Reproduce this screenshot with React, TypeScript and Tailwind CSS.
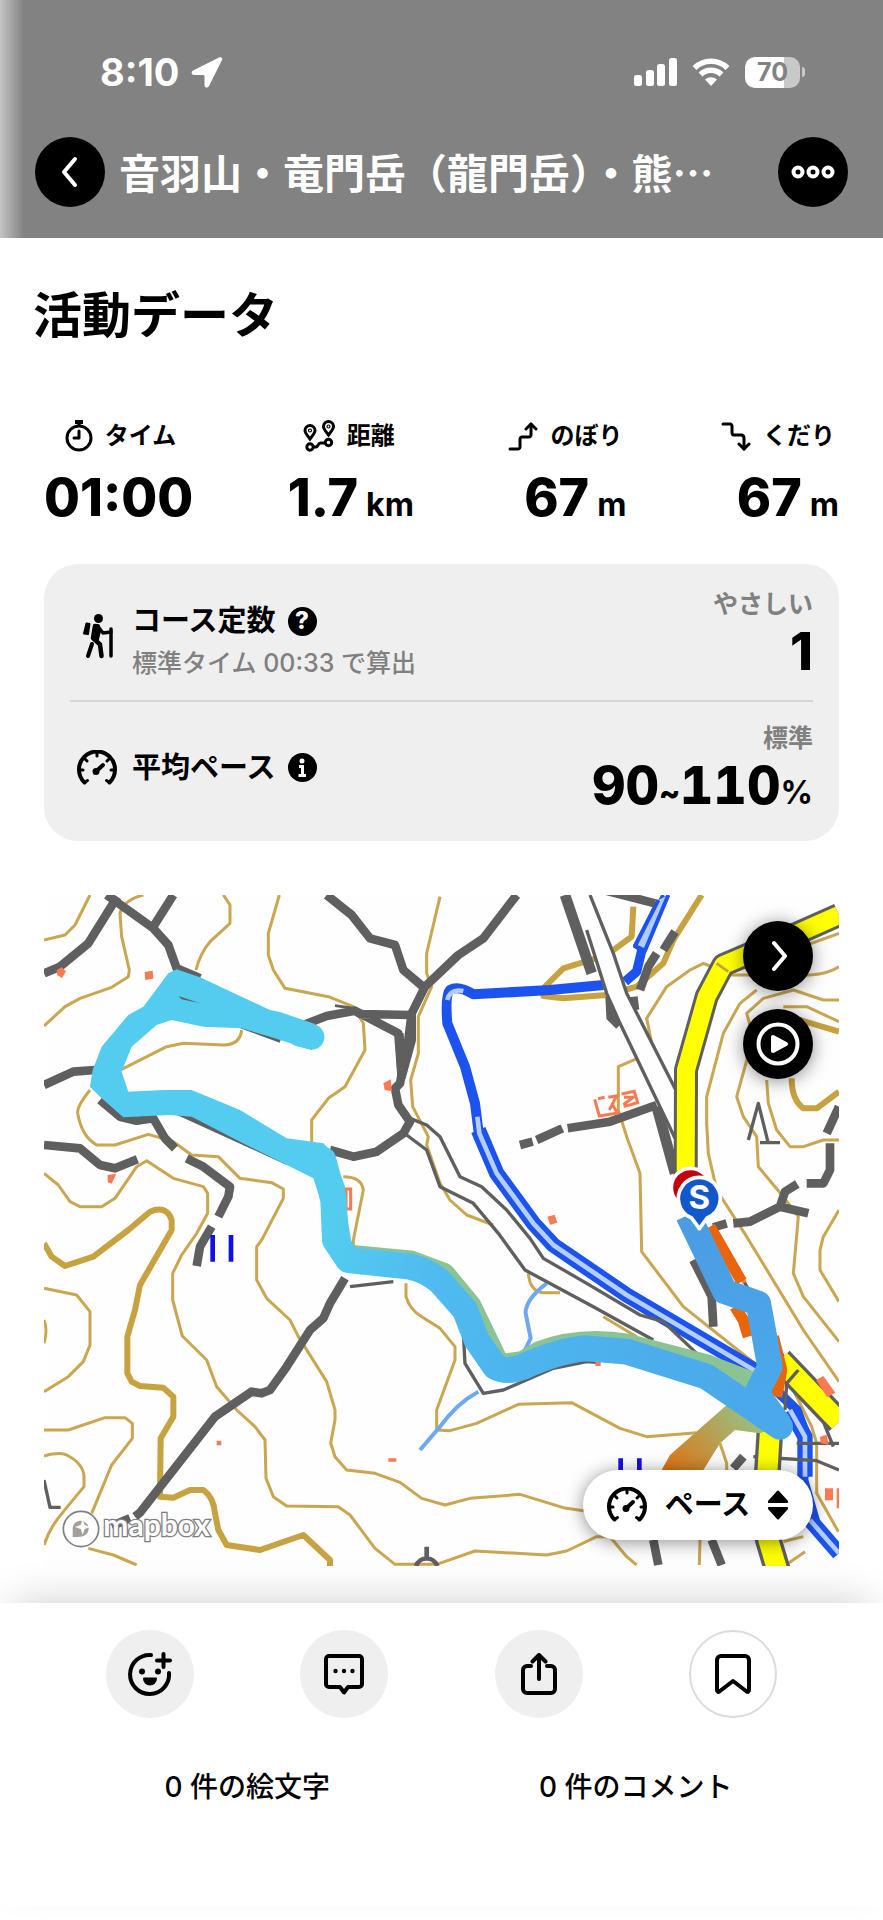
import type { ReactNode } from "react";

interface StatItem {
  label: string;
  value: string;
  unit?: string;
  icon: ReactNode;
  align: string;
  labelPadding: string;
}

const fontClass = "font-['Inter','Noto_Sans_CJK_JP',sans-serif]";

function TimerIcon() {
  return (
    <svg width="28" height="32" viewBox="0 0 28 32" fill="none" stroke="currentColor" strokeWidth="3">
      <circle cx="14" cy="18" r="12" />
      <path d="M10 2h8" strokeWidth="4" />
      <path d="M14 2v5" />
      <path d="M14 11v7H9" strokeLinecap="round" strokeLinejoin="round" />
    </svg>
  );
}

function RouteIcon() {
  return (
    <svg width="32" height="32" viewBox="0 0 32 32" fill="none" stroke="currentColor" strokeWidth="3">
      <path d="M7 19C4 15 2 13 2 10.500a5 5 0 0 1 10 0C12 13 10 15 7 19z" />
      <path d="M25.500 15c-3-4-5-6-5-8.500a5 5 0 0 1 10 0c0 2.500-2 4.500-5 8.500z" />
      <circle cx="7" cy="27" r="3.200" />
      <circle cx="25.500" cy="22.500" r="3.200" />
      <path d="M10.500 27h2.500c2 0 2-4 4.500-4h4.500" />
      <circle cx="7" cy="10.500" r="0.600" />
      <circle cx="25.500" cy="6.500" r="0.600" />
    </svg>
  );
}

function UpIcon() {
  return (
    <svg width="30" height="30" viewBox="0 0 30 30" fill="none" stroke="currentColor" strokeWidth="3" strokeLinecap="round" strokeLinejoin="round">
      <path d="M2 28h8c1 0 2-1 2-2v-8c0-1 1-2 2-2h7c1 0 2-1 2-2V3" />
      <path d="M18 8l5-5 5 5" />
    </svg>
  );
}

function DownIcon() {
  return (
    <svg width="30" height="30" viewBox="0 0 30 30" fill="none" stroke="currentColor" strokeWidth="3" strokeLinecap="round" strokeLinejoin="round">
      <path d="M2 3h7c1 0 2 1 2 2v6c0 2 1 3 2 3h7c2 0 3 1 3 3v11" />
      <path d="M18 23l5 5 5-5" />
    </svg>
  );
}

function GaugeIcon() {
  return (
    <svg width="40" height="36" viewBox="0 0 40 36" fill="none" stroke="currentColor" strokeWidth="4" strokeLinecap="round">
      <path d="M7.500 32.500A18 18 0 1 1 32.500 32.500" />
      <path d="M20 3v3M3 20h3M37 20h-3M8 9l2 2M32 9l-2 2M7.500 32.500l3-2M32.500 32.500l-3-2" strokeWidth="3" />
      <path d="M26 15L19.500 21" strokeWidth="4" />
      <circle cx="19" cy="21.500" r="1.500" />
    </svg>
  );
}

function HikerIcon() {
  return (
    <svg width="32" height="46" viewBox="0 0 32 46" fill="none" stroke="currentColor" strokeLinecap="round" strokeLinejoin="round">
      <circle cx="16.500" cy="5.500" r="4.500" fill="currentColor" stroke="none" />
      <path d="M4.500 10.500l3 .5-1.500 10-4-.5z" fill="currentColor" strokeWidth="2" />
      <path d="M13 13L11 25l7 6.500L19.500 43" strokeWidth="4.500" />
      <path d="M13 13h3l1 5-2 8-3-1z" fill="currentColor" strokeWidth="4" />
      <path d="M17 15l4 5 8-1" strokeWidth="3.500" />
      <path d="M29 16v27" strokeWidth="3.500" />
      <path d="M10 31L6 43" strokeWidth="4" />
    </svg>
  );
}

// Topographic base map with the recorded track on top
function TrackMap() {
  return (
    <svg viewBox="12 15 2385 2013" className="block w-full" role="img" aria-label="活動ルート">
      <defs>
        <linearGradient id="track" gradientUnits="userSpaceOnUse" x1="885" y1="1000" x2="2100" y2="1500">
          <stop offset="0" stopColor="#53ccef" />
          <stop offset="0.25" stopColor="#4fbbf0" />
          <stop offset="1" stopColor="#4aa9ea" />
        </linearGradient>
        <linearGradient id="branch" gradientUnits="userSpaceOnUse" x1="1880" y1="1740" x2="2090" y2="1560">
          <stop offset="0" stopColor="#e07414" />
          <stop offset="1" stopColor="#9eba78" />
        </linearGradient>
        <linearGradient id="leg" gradientUnits="userSpaceOnUse" x1="1940" y1="960" x2="2180" y2="1500">
          <stop offset="0" stopColor="#4b9be2" />
          <stop offset="1" stopColor="#4aa9ea" />
        </linearGradient>
      </defs>
      <rect x="12" y="15" width="2385" height="2013" fill="#fefefe" />

      {/* Contour lines */}
      <g fill="none" stroke="#c9a650" strokeWidth="9" strokeLinejoin="round">
        <path d="M150 15L105 105L75 135L12 150" />
        <path d="M310 15Q250 30 240 70L245 140L268 240L265 260L215 292L120 325L75 350L12 408" />
        <path d="M550 15L570 45V100L510 155Q480 190 468 240" />
        <path d="M718 15L685 130V195L700 240L735 295L865 320L940 350L970 400L975 480L915 590L865 625L815 690V760" />
        <path d="M605 420Q600 465 550 465L430 460L380 470L245 538" />
        <path d="M150 600Q110 650 113 670Q125 740 170 765H225L325 733L400 755L455 795L535 800L600 865L695 878L730 897V925L665 1050L650 1070V1170L680 1225L750 1290L775 1340L860 1475L885 1560V1590L872 1660L885 1700L920 1740L1005 1750L1080 1777L1145 1825L1215 1845L1290 1825L1440 1813L1570 1853L1650 1865" />
        <path d="M12 850L55 885L90 935L120 950H185L225 925L290 830L320 812L400 865L490 890L503 910V970L470 1030L425 1095L398 1150V1230L427 1338L500 1410L530 1490L590 1560L645 1610L675 1650L678 1765L700 1820L740 1848L895 1850L930 1875L1005 1975L1065 2023H1190L1305 1983L1520 1995L1580 1983L1670 1940H1710L1760 2000L1790 2025" />
        <path d="M12 1195L110 1215L150 1265V1365L130 1415L85 1460L12 1505" />
        <path d="M12 1620H85L195 1583H255L277 1600V1645L215 1725L155 1870" />
        <path d="M12 1698Q60 1685 80 1695Q130 1720 132 1760V1790L70 1865Q30 1910 12 1965" />
        <path d="M12 1290Q24 1320 12 1360M145 1975L220 1995L290 2025" />
        <path d="M1200 20L1160 190V250L1175 290L1135 380V490L1112 570L1118 650L1165 740L1160 765L1200 880L1230 930L1280 975L1360 1005" />
        <path d="M910 860Q965 860 970 900L940 1050V1080M1298 1180" />
        <path d="M1098 1180V1220Q1110 1260 1145 1280L1200 1315L1245 1370V1410L1190 1560V1620L1230 1622L1310 1600L1435 1543L1595 1538L1740 1615L1820 1640L1970 1628" />
        <path d="M1465 1150Q1470 1205 1510 1208H1560M1690 1280L1790 1340" />
        <path d="M2040 240L1990 220L1950 240L1880 290L1820 385L1840 485L1735 530V660L1760 740L1800 850L1805 1085L1930 1250L2150 1425" />
        <path d="M2397 130L2300 165M2397 230Q2370 250 2310 255L2070 255" />
        <path d="M2150 300L2100 340L2050 430L2000 620V700L2005 790L2030 900L2120 1040L2290 1320L2397 1475" />
        <path d="M2397 330H2350L2260 300L2170 325L2120 370L2140 440L2090 620L2110 680L2150 740L2155 830L2230 920L2275 980L2260 1150L2290 1220L2397 1355" />
        <path d="M2180 570L2185 640L2210 720L2250 770H2290L2350 750H2397M2230 350L2300 350L2397 395" />
        <path d="M2397 960L2350 1040L2340 1080V1140L2397 1235" />
        <path d="M2260 1500L2315 1610L2330 1660V1810L2395 1925M2040 1660L2060 1720V1750M1980 1950L1978 2025M2245 2020L2295 1985M2230 1955L2290 1940" />
      </g>
      <g fill="none" stroke="#c6a240" strokeWidth="18" strokeLinejoin="round">
        <path d="M12 1060L35 1100L75 1128L160 1100L265 1020L330 965Q380 945 395 990V1020L300 1185L285 1260L262 1340V1450L275 1475L300 1488L370 1493L400 1520V1580L362 1645L360 1820L400 1823L450 1800H490Q520 1820 525 1870L535 1920L560 1965L660 1980L790 1935L870 2010V2028" />
        <path d="M1985 15L1900 150L1870 220L1790 290L1700 315L1570 325L1510 318L1515 290L1570 235L1700 195L1775 140L1780 50" />
        <path d="M2255 565Q2255 630 2290 655H2330L2397 605M2280 390L2397 425" />
      </g>

      {/* Streams and rivers */}
      <g fill="none" strokeLinejoin="round">
        <path d="M1520 1180Q1455 1230 1457 1270L1472 1345L1450 1390M1315 1505Q1250 1540 1200 1610L1140 1680" stroke="#6fa8ef" strokeWidth="12" />
        <path d="M1690 285L1530 300L1300 313Q1255 285 1230 300Q1215 315 1222 400L1275 530L1305 640L1315 720L1370 850L1480 1000L1540 1065L1760 1215L2150 1445L2270 1560L2300 1640L2290 1770L2330 1910L2397 1990" stroke="#1c53ee" strokeWidth="30" />
        <path d="M1315 720L1370 850L1480 1000L1540 1065L1760 1215L2150 1445M2250 1560L2295 1640L2295 1760M2310 1890L2397 1990" stroke="#1c53ee" strokeWidth="46" />
        <path d="M1270 303Q1230 295 1222 330M1312 680L1318 730L1370 850L1480 1000L1540 1065L1760 1215L2150 1445M2250 1560L2295 1640L2295 1760M2310 1890L2397 1990" stroke="#b4ceff" strokeWidth="14" />
        <path d="M1870 15L1785 168L1805 182L1795 240L1760 270" stroke="#1c53ee" strokeWidth="12" />
        <path d="M1855 30L1785 168L1815 182L1885 15" fill="#b0ccff" stroke="#1c53ee" strokeWidth="12" />
        <path d="M1805 182L1790 245L1755 275" stroke="#1c53ee" strokeWidth="28" />
      </g>

      {/* Roads */}
      <g fill="none" stroke="#5f5f5f" strokeWidth="26" strokeLinejoin="round">
        <path d="M200 15L235 40L340 115L385 165L410 235L480 265" />
        <path d="M232 20L145 160L60 230L12 250M400 15L340 110" />
        <path d="M860 15L935 75L990 145L1065 165L1090 240L1155 295" />
        <path d="M1430 15L1330 145L1255 195L1155 290L1115 370L1105 450L1080 580L1065 595L1075 645L1110 695L1090 730L1010 785L940 800L870 780" />
        <path d="M1115 370V450L1085 560L1078 430" />
        <path d="M790 405L860 378L945 362L960 372L1115 375M950 365L1075 430L1085 560" />
        <path d="M885 347L945 355" strokeWidth="8" />
        <path d="M12 585L100 545L165 540M12 765L120 775L180 825L225 835L292 808" />
        <path d="M180 630L240 680L290 692L340 685L375 745L405 775M440 805L490 830L570 890L565 920L535 980M515 1010L480 1070L470 1128" />
        <path d="M400 660L740 815M600 405L722 450" strokeWidth="18" />
        <path d="M915 1165L870 1240L850 1285L810 1320L740 1430L690 1500L665 1510L635 1505L525 1580L300 1868L285 1880M270 1885L215 1908" />
        <path d="M1690 0L1845 40M1905 125L1870 180M1850 190L1825 230L1800 300M1780 320L1785 360" />
        <path d="M1440 765L1478 755M1490 750L1567 715M1583 715L1710 695L1850 645" />
        <path d="M2020 1012L2060 1000M2080 1000L2130 995L2220 950L2235 905L2272 882M2220 950L2305 970M2300 880H2350L2370 840V760M2360 730L2397 650" />
        <path d="M1960 1110L2015 1220L2020 1310M2080 1735L2110 1700M1840 1950L1855 2025M2015 1950L2045 2025" />
      </g>
      <path d="M1712 320L1715 380L1740 405M1850 650L1905 850" fill="none" stroke="#5f5f5f" strokeWidth="32" />
      <path d="M1650 15L1720 190L1760 310L1905 600L1905 740L1740 405L1700 310L1640 130L1600 15Z" fill="#fefefe" />
      <path d="M1575 15L1655 250" fill="none" stroke="#5f5f5f" strokeWidth="32" />
      <g fill="none" stroke="#5f5f5f" strokeWidth="10" strokeLinejoin="round">
        <path d="M1650 15L1720 190L1760 310L1910 605M1640 120L1700 310L1740 400L1905 745" />
        <path d="M1110 685L1160 705L1200 740L1260 860L1325 890L1400 960L1470 1045L1510 1105L1640 1180L1800 1275L1870 1295L1970 1390" />
        <path d="M1100 735L1160 780L1200 890L1300 940L1375 1030L1455 1140L1660 1250L1840 1350" />
        <path d="M1270 1330L1275 1420L1330 1510L1390 1500L1540 1435L1640 1415L1680 1418" />
        <path d="M930 1190L1060 1175M2125 750L2155 640L2185 760M2160 758H2220M12 1770L30 1852H62" />
        <path d="M2020 1020L2110 1170L2230 1400M2260 1500L2340 1570L2380 1670M2270 1660H2397M2140 1700L2330 1712L2397 1740" />
        <path d="M1160 1970V2010M1128 2028A34 34 0 0 1 1192 2028" strokeWidth="14" />
      </g>

      {/* Yellow prefectural road */}
      <g fill="none" strokeLinejoin="round">
        <path d="M2397 75L2250 140L2050 225L2000 320L1938 540L1937 880" stroke="#5f5f5f" strokeWidth="72" />
        <path d="M2397 75L2250 140L2050 225L2000 320L1938 540L1937 880" stroke="#ffff00" strokeWidth="54" />
        <path d="M2220 1410L2397 1595M2190 1620L2180 1780L2185 1950L2215 2050" stroke="#5f5f5f" strokeWidth="80" />
        <path d="M2220 1410L2397 1595M2190 1620L2180 1780L2185 1950L2215 2050" stroke="#ffff00" strokeWidth="60" />
        <path d="M2030 220L2065 245" stroke="#c6a240" strokeWidth="8" />
        <path d="M2275 1440L2240 1480L2235 1560" stroke="#5f5f5f" strokeWidth="10" />
      </g>

      {/* Buildings and paddy marks */}
      <g fill="#fb7a52">
        <path d="M50 240l15-8 13 12-12 20-14-8zM314 246l24-4 2 24-24 4zM1030 580l22-12 4 36-22-4zM203 855l26-4-14 30-12-4z" />
        <path d="M1522 980l22-6 8 24-22 6zM530 1652h14v14h-14zM1045 1705h24v10h-24zM2328 1470l22-12 36 50-24 14zM2340 1640l20-6 6 30-24-4zM2355 1795h24v36h-24zM2390 1795h7v60h-7zM1666 1412h16v16h-16zM2100 1165l14-4 4 16-12 4z" />
      </g>
      <g fill="none" stroke="#fb7a52" strokeWidth="9">
        <path d="M918 897h14v60h-14zM1664 628l14 50 60-10M1674 626l20-4M1705 622l25-4-22 42M1730 665l-12-20M1745 612l38-8 10 34-42 12M1752 622l28 0-30 22" />
      </g>
      <path d="M518 1035v80M573 1035v80M1742 1705v40M1798 1705v40" stroke="#1010e8" strokeWidth="14" />

      {/* Recorded track */}
      <g fill="none" strokeLinejoin="round">
        <path d="M2010 1010L2105 1175M2085 1250L2110 1290L2125 1340M2200 1340L2225 1440L2210 1520" stroke="#e8650c" strokeWidth="34" />
        <path d="M1865 1740L1890 1695L2060 1545L2180 1500L2210 1610L2160 1630L2085 1620L2040 1660L1990 1740Z" fill="url(#branch)" />
        <path d="M920 1100L1110 1118L1210 1155L1288 1250L1375 1430L1450 1420L1500 1390Q1620 1345 1760 1368L2000 1430L2180 1500" stroke="#8cc394" strokeWidth="74" />
        <path d="M1944 975L2055 1205L2155 1240L2190 1430L2150 1510L2220 1605" stroke="url(#leg)" strokeWidth="76" />
        <path d="M410 238L480 262L690 360L720 366L825 402L815 480L690 440L605 415L490 410L395 390L350 405L275 470L245 545L265 605L370 600L455 600L600 660L740 745L850 760L880 790L915 890L925 1000L935 1060L848 1060L845 940L820 865L730 820L600 755L455 680L390 675L250 682L180 620L150 590L158 540L185 470L265 375L310 350L385 250Z" fill="#53ccef" />
        <path d="M780 432L815 441" stroke="#53ccef" strokeWidth="76" strokeLinecap="round" />
        <path d="M850 810L880 930L885 1050L925 1110L1110 1130Q1160 1140 1200 1175L1275 1260L1310 1350L1365 1430Q1400 1450 1450 1430Q1560 1380 1640 1375L1760 1385L2000 1460L2220 1610" stroke="url(#track)" strokeWidth="78" strokeLinecap="round" />
        <path d="M415 318L480 340L425 328Z" fill="#5f5f5f" />
      </g>

      {/* Goal and start pins */}
      <circle cx="1952" cy="893" r="58" fill="#c4000f" stroke="#fff" strokeWidth="11" />
      <path d="M1978 1016L1955 984A63 63 0 1 1 2001 984Z" fill="#1257cc" stroke="#fff" strokeWidth="11" strokeLinejoin="round" />
      <text x="1978" y="958" textAnchor="middle" fontSize="99" fontWeight="700" fill="#fff" fontFamily="Inter, sans-serif">
        S
      </text>

      {/* Attribution */}
      <circle cx="123" cy="1917" r="53" fill="#fff" stroke="#808080" strokeWidth="5" />
      <path d="M98 1942V1915A24 24 0 1 1 122 1940Z" fill="#a3a09a" />
      <path d="M128 1888l6 17 17 6-17 6-6 17-6-17-17-6 17-6z" fill="#fff" />
      <text x="190" y="1938" fontSize="90" fontWeight="700" fill="#fff" stroke="#808080" strokeWidth="8" paintOrder="stroke" fontFamily="Lato, sans-serif">
        mapbox
      </text>
    </svg>
  );
}

const stats: StatItem[] = [
  { label: "タイム", value: "01:00", icon: <TimerIcon />, align: "items-center", labelPadding: "pl-1" },
  { label: "距離", value: "1.7", unit: "km", icon: <RouteIcon />, align: "items-center", labelPadding: "pr-1" },
  { label: "のぼり", value: "67", unit: "m", icon: <UpIcon />, align: "items-end", labelPadding: "pr-1" },
  { label: "くだり", value: "67", unit: "m", icon: <DownIcon />, align: "items-end", labelPadding: "pr-1" },
];

export default function App() {
  return (
    <div className={`${fontClass} min-h-screen bg-white text-black`}>
      {/* Header */}
      <header className="bg-[linear-gradient(to_right,#c4c4c4,#828282_24px)] pt-12 pb-[31px] text-white">
        <div className="flex h-12 items-center justify-between pr-[78px] pl-[100px]">
          <div className="flex items-center gap-3">
            <span className="text-[38px] leading-12 font-bold">8:10</span>
            <svg width="32" height="32" viewBox="0 0 32 32" fill="currentColor">
              <path d="M28 1.500L2 14.500C0 15.500 0 19 3 19h9c1 0 1.500 .5 1.500 1.500V29c0 3 3 3.500 4.500 1L31 4c1-2-1-3.500-3-2.500z" />
            </svg>
          </div>
          <div className="flex items-center gap-[15px]">
            <svg width="43" height="28" viewBox="0 0 43 28" fill="currentColor">
              <rect x="0" y="17" width="8" height="11" rx="2.500" />
              <rect x="12" y="12" width="8" height="16" rx="2.500" />
              <rect x="23" y="6" width="8" height="22" rx="2.500" />
              <rect x="35" y="0" width="8" height="28" rx="2.500" />
            </svg>
            <svg width="38" height="28" viewBox="0 0 38 28" fill="none" stroke="currentColor" strokeWidth="5.500">
              <path d="M2.500 10a23.500 23.500 0 0 1 33 0" />
              <path d="M8.500 16.500a15 15 0 0 1 21 0" />
              <path d="M13 21.500a9 9 0 0 1 12 0l-6 6.500z" fill="currentColor" stroke="none" />
            </svg>
            <div className="flex items-center gap-[2px]">
              <span className="flex h-[31px] w-[55px] items-center justify-center rounded-[10px] bg-[linear-gradient(to_right,#fff_70%,#c9c9c9_70%)] text-[25px] leading-none font-bold text-[#828282]">
                70
              </span>
              <span className="h-[10px] w-[3px] rounded-r-full bg-[#c9c9c9]"></span>
            </div>
          </div>
        </div>
        <div className="mt-[41px] flex items-center gap-[14px] px-[35px]">
          <button aria-label="戻る" className="flex size-[70px] shrink-0 items-center justify-center rounded-full bg-black">
            <svg width="18" height="32" viewBox="0 0 18 32" fill="none" stroke="currentColor" strokeWidth="4" strokeLinecap="round" strokeLinejoin="round">
              <path d="M14 3L3 16l11 13" />
            </svg>
          </button>
          <h1 className="min-w-0 flex-1 whitespace-nowrap text-[41px] leading-[56px] font-bold">
            音羽山・竜門岳（龍門岳）・熊<span className="font-['Noto_Sans_CJK_JP',sans-serif]">…</span>
          </h1>
          <button aria-label="メニュー" className="flex size-[70px] shrink-0 items-center justify-center rounded-full bg-black">
            <svg width="44" height="14" viewBox="0 0 44 14" fill="none" stroke="currentColor" strokeWidth="4">
              <circle cx="7" cy="7" r="4.500" />
              <circle cx="22" cy="7" r="4.500" />
              <circle cx="37" cy="7" r="4.500" />
            </svg>
          </button>
        </div>
      </header>

      <main className="px-11 pb-[37px]">
        <h2 className="-ml-[11px] pt-[42px] text-[49px] leading-[72px] font-bold">活動データ</h2>

        {/* Stats */}
        <dl className="mt-16 flex justify-between">
          {stats.map((stat) => (
            <div key={stat.label} className={`flex flex-col ${stat.align}`}>
              <dt className={`flex h-10 items-center gap-3 text-[24px] leading-10 font-bold ${stat.labelPadding}`}>
                {stat.icon}
                {stat.label}
              </dt>
              <dd className="mt-[10px] flex h-16 items-baseline gap-2 text-[52px] leading-[64px] font-extrabold">
                {stat.value}
                {stat.unit && <span className="text-[32px] leading-10 font-bold">{stat.unit}</span>}
              </dd>
            </div>
          ))}
        </dl>

        {/* Course summary */}
        <section className="mt-[34px] rounded-[34px] bg-[#efefef] px-[26px]">
          <div className="flex h-[138px] items-center border-b-2 border-[#d6d6d6]">
            <div className="flex w-[62px] pt-2 pl-3">
              <HikerIcon />
            </div>
            <div className="flex-1 pt-5">
              <div className="flex items-center gap-3 text-[29px] leading-10 font-bold">
                コース定数
                <button aria-label="コース定数とは" className="flex size-[29px] items-center justify-center rounded-full bg-black text-[24px] leading-none font-extrabold text-white">
                  ?
                </button>
              </div>
              <p className="mt-[2px] text-[25px] leading-10 font-medium text-[#808080]">標準タイム 00:33 で算出</p>
            </div>
            <div className="pt-2 text-right">
              <p className="text-[25px] leading-8 font-bold text-[#808080]">やさしい</p>
              <p className="text-[52px] leading-[64px] font-extrabold">1</p>
            </div>
          </div>
          <div className="flex h-[139px] items-center">
            <div className="flex w-[62px] pb-2 pl-[7px]">
              <GaugeIcon />
            </div>
            <div className="flex flex-1 items-center gap-3 pb-2 text-[29px] leading-10 font-bold">
              平均ペース
              <button aria-label="平均ペースとは" className="flex size-[29px] items-center justify-center rounded-full bg-black text-white">
                <svg width="10" height="20" viewBox="0 0 10 20" fill="none" stroke="currentColor" strokeWidth="3.500">
                  <circle cx="5" cy="3" r="2.500" fill="currentColor" stroke="none" />
                  <path d="M2 8.500h3.500V18M1.500 17.500h7.500" strokeWidth="3" />
                </svg>
              </button>
            </div>
            <div className="pt-1 text-right">
              <p className="text-[25px] leading-8 font-bold text-[#808080]">標準</p>
              <p className="text-[52px] leading-[64px] font-extrabold tabular-nums">
                90<span className="text-[32px]">~</span>110<span className="text-[32px] font-bold">%</span>
              </p>
            </div>
          </div>
        </section>

        {/* Map */}
        <section className="relative mt-[54px] overflow-hidden">
          <TrackMap />
          <div className="absolute top-[26px] right-[26px] flex flex-col gap-[18px] text-white">
            <button aria-label="地図を開く" className="flex size-[70px] items-center justify-center rounded-full bg-black shadow-[0_2px_18px_rgba(0,0,0,0.45)]">
              <svg width="18" height="32" viewBox="0 0 18 32" fill="none" stroke="currentColor" strokeWidth="4" strokeLinecap="round" strokeLinejoin="round">
                <path d="M5 3l11 13L5 29" />
              </svg>
            </button>
            <button aria-label="再生" className="flex size-[70px] items-center justify-center rounded-full bg-black shadow-[0_2px_18px_rgba(0,0,0,0.45)]">
              <svg width="44" height="44" viewBox="0 0 44 44" fill="none" stroke="currentColor" strokeWidth="4">
                <circle cx="22" cy="22" r="19.500" />
                <path d="M17 15v14l13-7z" fill="currentColor" strokeLinejoin="round" />
              </svg>
            </button>
          </div>
          <button className="absolute right-[26px] bottom-[26px] flex h-[70px] w-[230px] items-center justify-between rounded-full bg-white pr-[25px] pl-6 text-[29px] leading-10 font-bold shadow-[0_2px_18px_rgba(0,0,0,0.45)]">
            <GaugeIcon />
            ペース
            <svg width="20" height="30" viewBox="0 0 20 30" fill="currentColor">
              <path d="M9 1L0 11c-.5 1 0 2 1 2h18c1 0 1.500-1 1-2L11 1c-.5-.7-1.500-.7-2 0zM9 29L0 19c-.5-1 0-2 1-2h18c1 0 1.500 1 1 2L11 29c-.5 .7-1.500 .7-2 0z" />
            </svg>
          </button>
        </section>
      </main>

      {/* Actions */}
      <footer className="relative bg-white px-[53px] pt-[27px] pb-[100px] shadow-[0_-14px_40px_-14px_rgba(0,0,0,0.2)]">
        <div className="grid grid-cols-4 justify-items-center">
          <button aria-label="絵文字を送る" className="flex size-[88px] items-center justify-center rounded-full bg-[#efefef]">
            <svg width="44" height="44" viewBox="0 0 44 44" fill="none" stroke="currentColor" strokeWidth="4" strokeLinecap="round">
              <path d="M23 3A19.500 19.500 0 1 0 41 21" />
              <path d="M35.500 2v13M29 8.500h13" />
              <circle cx="14" cy="19.500" r="3" fill="currentColor" stroke="none" />
              <circle cx="30" cy="19.500" r="3" fill="currentColor" stroke="none" />
              <path d="M16 26.500c0 8 12 8 12 0z" fill="currentColor" strokeWidth="2" strokeLinejoin="round" />
            </svg>
          </button>
          <button aria-label="コメントする" className="flex size-[88px] items-center justify-center rounded-full bg-[#efefef]">
            <svg width="40" height="42" viewBox="0 0 40 42" fill="none" stroke="currentColor" strokeWidth="4" strokeLinejoin="round">
              <path d="M5 3h30a3 3 0 0 1 3 3v25a3 3 0 0 1-3 3H24l-4 5.500-4-5.500H5a3 3 0 0 1-3-3V6a3 3 0 0 1 3-3z" />
              <g fill="currentColor" stroke="none">
                <circle cx="11.500" cy="18" r="2.200" />
                <circle cx="20" cy="18" r="2.200" />
                <circle cx="28.500" cy="18" r="2.200" />
              </g>
            </svg>
          </button>
          <button aria-label="共有" className="flex size-[88px] items-center justify-center rounded-full bg-[#efefef]">
            <svg width="36" height="42" viewBox="0 0 36 42" fill="none" stroke="currentColor" strokeWidth="4" strokeLinecap="round" strokeLinejoin="round">
              <path d="M10 13H6a4 4 0 0 0-4 4v19a4 4 0 0 0 4 4h24a4 4 0 0 0 4-4V17a4 4 0 0 0-4-4h-4" />
              <path d="M18 26V3M11.500 8.500L18 2l6.500 6.500" />
            </svg>
          </button>
          <button aria-label="保存" className="flex size-[88px] items-center justify-center rounded-full border-2 border-[#dcdcdc] bg-white">
            <svg width="36" height="40" viewBox="0 0 36 40" fill="none" stroke="currentColor" strokeWidth="4" strokeLinejoin="round">
              <path d="M6 2h24a4 4 0 0 1 4 4v30c0 2-1.500 2.500-3 1L18 27 5 37c-1.500 1.500-3 1-3-1V6a4 4 0 0 1 4-4z" />
            </svg>
          </button>
        </div>
        <div className="mt-[49px] grid grid-cols-2 text-center text-[28px] leading-10 font-medium">
          <a href="#reactions">0 件の絵文字</a>
          <a href="#comments">0 件のコメント</a>
        </div>
      </footer>
    </div>
  );
}
